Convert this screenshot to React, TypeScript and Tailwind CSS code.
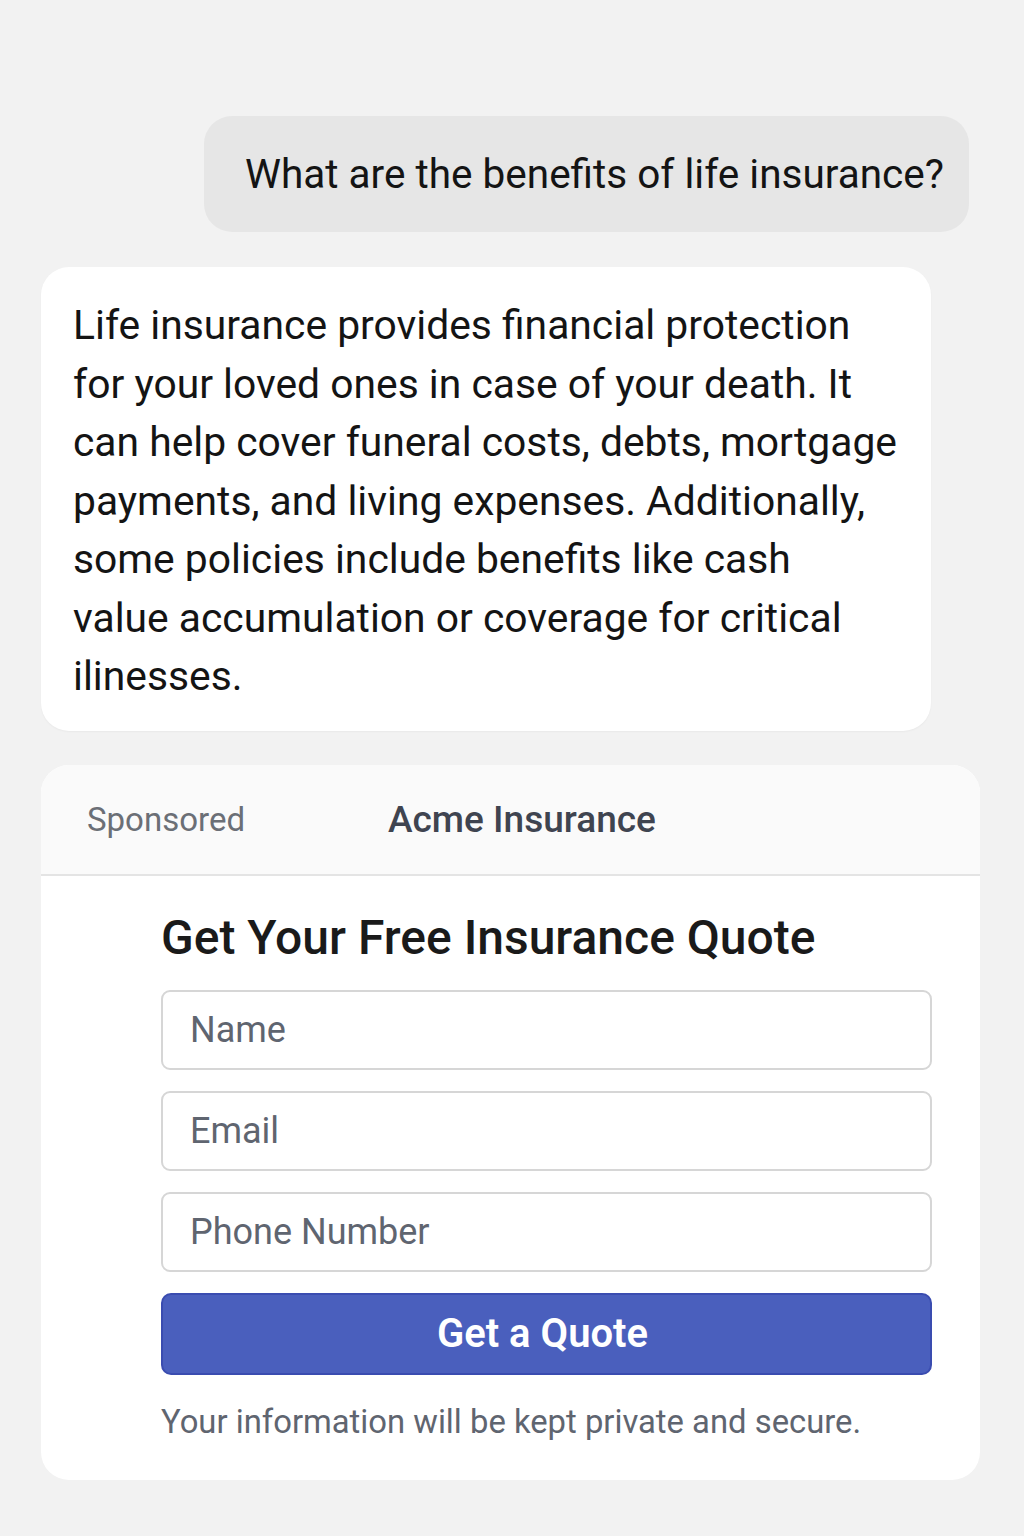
import React from "react";

export default function App() {
  const font = { fontFamily: "Roboto, 'Liberation Sans', sans-serif" };
  return (
    <div className="min-h-[1536px] w-[1024px] bg-[#f2f2f2]" style={font}>
      <div className="flex flex-col pt-[116px]">
        <div className="flex justify-end pr-[55px]">
          <div className="w-[765px] h-[116px] rounded-[28px] bg-[#e6e6e6] flex items-center pl-[41px]">
            <span className="text-[40.5px] text-[#141414] leading-none">What are the benefits of life insurance?</span>
          </div>
        </div>
        <div className="mt-[35px] ml-[41px] w-[890px] h-[464px] rounded-[28px] bg-white pl-[32px] pt-[29px] shadow-[0_1px_2px_rgba(0,0,0,0.04)]">
          <p className="text-[40.8px] leading-[58.5px] text-[#141414] whitespace-nowrap">
            Life insurance provides financial protection<br />
            for your loved ones in case of your death. It<br />
            can help cover funeral costs, debts, mortgage<br />
            payments, and living expenses. Additionally,<br />
            some policies include benefits like cash<br />
            value accumulation or coverage for critical<br />
            ilinesses.
          </p>
        </div>
        <div className="mt-[34px] ml-[41px] w-[939px] h-[715px] rounded-[28px] bg-white overflow-hidden flex flex-col">
          <div className="h-[111px] shrink-0 bg-[#fafafa] border-b-2 border-[#e4e4e4] flex items-center">
            <span className="ml-[46px] text-[33px] text-[#6b6f76]">Sponsored</span>
            <span className="ml-[143px] text-[37px] font-medium text-[#3f4450]">Acme Insurance</span>
          </div>
          <div className="pl-[120px] pr-[48px] flex flex-col">
            <h2 className="mt-[38px] text-[48px] font-medium text-[#1a1a1a] leading-none">Get Your Free Insurance Quote</h2>
            <div className="mt-[28px] flex flex-col gap-[21px]">
              {["Name", "Email", "Phone Number"].map((p) => (
                <div key={p} className="h-[80px] rounded-[9px] border-2 border-[#d6d6d6] flex items-center pl-[27px]">
                  <span className="text-[36px] text-[#5f6570]">{p}</span>
                </div>
              ))}
              <div className="h-[82px] rounded-[10px] bg-[#4a5fbd] border-2 border-[#3a4cb0] flex items-center justify-center pr-[8px]">
                <span className="text-[40px] font-semibold text-white">Get a Quote</span>
              </div>
            </div>
            <p className="mt-[31px] text-[32.8px] text-[#5f6570] leading-none whitespace-nowrap">Your information will be kept private and secure.</p>
          </div>
        </div>
      </div>
    </div>
  );
}
